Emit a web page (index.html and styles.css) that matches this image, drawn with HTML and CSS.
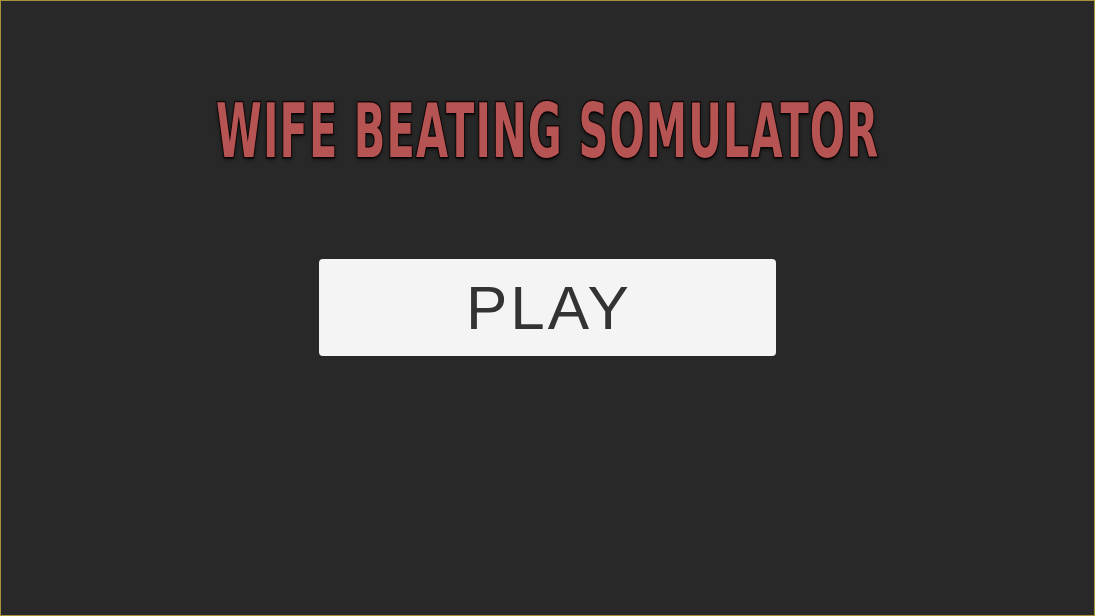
FILE: index.html
```html
<!DOCTYPE html>
<html lang="en">
<head>
  <meta charset="UTF-8">
  <title>Main menu</title>
  <link rel="stylesheet" href="styles.css">
</head>
<body>
  <div class="screen">
    <h1 class="title"><span class="title-text">WIFE BEATING SOMULATOR</span></h1>
    <button class="play-btn" type="button">PLAY</button>
  </div>
</body>
</html>
```

FILE: styles.css
```css
html, body {
  margin: 0;
  height: 100%;
}

body {
  background-color: #282828;
  font-family: "Liberation Sans", Arial, sans-serif;
}

.screen {
  box-sizing: border-box;
  height: 100%;
  border: 1px solid #a8933a;
  display: flex;
  flex-direction: column;
  align-items: center;
}

/* Menu title, squeezed into a tall condensed look */
.title {
  margin: 94px 0 0;
  height: 72px;
  display: flex;
  justify-content: center;
  width: 100%;
}

.title-text {
  display: inline-block;
  font-family: "DejaVu Sans", sans-serif;
  font-weight: bold;
  font-size: 75px;
  line-height: 72px;
  letter-spacing: 2px;
  color: #b65454;
  -webkit-text-stroke: 3px #140808;
  paint-order: stroke fill;
  text-shadow: 0 2px 6px rgba(0, 0, 0, 0.7);
  white-space: nowrap;
  transform: scaleX(0.553);
}

/* Play button */
.play-btn {
  margin-top: 92px;
  width: 457px;
  height: 97px;
  border: none;
  border-radius: 4px;
  background-color: #f4f4f4;
  color: #333333;
  font-family: "Liberation Sans", Arial, sans-serif;
  font-size: 62px;
  line-height: 1;
  letter-spacing: 3px;
  padding: 0 0 0 3px;
  cursor: pointer;
}
```
